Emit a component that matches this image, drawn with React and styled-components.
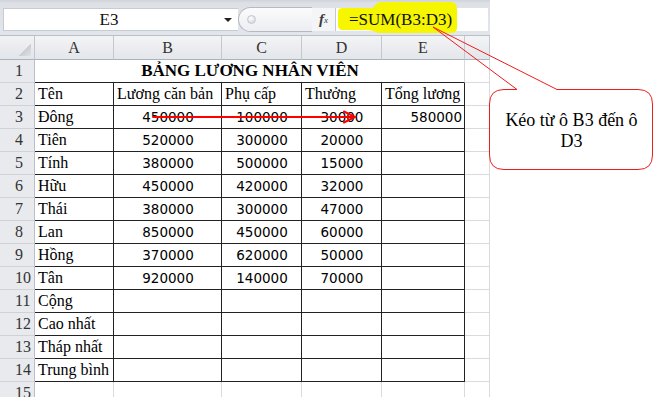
import React from 'react';
import styled, { createGlobalStyle } from 'styled-components';

const GlobalStyle = createGlobalStyle`
  html, body {
    margin: 0;
    padding: 0;
    background: #fff;
  }
`;

const serif = '"Liberation Serif", "Times New Roman", serif';

const Page = styled.div`
  position: relative;
  width: 657px;
  height: 397px;
  overflow: hidden;
  background: #fff;
  font-family: ${serif};
`;

const Sheet = styled.div`
  width: 490px;
  display: flex;
  flex-direction: column;
`;

const FormulaBar = styled.div`
  height: 36px;
  box-sizing: border-box;
  padding: 8px 2px 4px 3px;
  display: flex;
  background: linear-gradient(#cfd3d9 0, #dde1e6 3px, #e2e5e9 100%);
  border-bottom: 1px solid #b9c0c8;
`;

const NameBox = styled.div`
  width: 235px;
  display: flex;
  align-items: center;
  box-sizing: border-box;
  background: #fff;
  border: 1px solid #c6ccd3;
  border-right: none;
  font-family: ${serif};
  font-size: 17px;
  color: #111;
`;

const NameText = styled.span`
  flex: 1;
  text-align: center;
  padding-right: 10px;
`;

const DropArrow = styled.span`
  width: 0;
  height: 0;
  border-left: 4px solid transparent;
  border-right: 4px solid transparent;
  border-top: 4px solid #222;
  margin-right: 6px;
`;

const Splitter = styled.div`
  width: 74px;
  display: flex;
  align-items: center;
  box-sizing: border-box;
  margin-top: -1px;
  margin-bottom: -1px;
  border: 1px solid #b3bac3;
  border-right: none;
  border-radius: 13px 0 0 13px;
  background: linear-gradient(#fbfbfc, #eceef1);
`;

const Handle = styled.span`
  width: 7px;
  height: 7px;
  margin-left: 8px;
  border-radius: 50%;
  background: radial-gradient(circle at 40% 35%, #fff, #c9ced5);
  border: 1px solid #c2c7ce;
`;

const FxBox = styled.div`
  width: 24px;
  display: flex;
  align-items: center;
  justify-content: center;
  box-sizing: border-box;
  background: #f4f5f7;
  border-right: 1px solid #c3c8cf;
  font-family: ${serif};
  font-style: italic;
  font-weight: 700;
  font-size: 15px;
  color: #3a3a3a;

  sub {
    font-size: 9px;
    font-weight: 400;
    vertical-align: -1px;
  }
`;

const FormulaInput = styled.div`
  position: relative;
  flex: 1;
  display: flex;
  align-items: center;
  padding-left: 13px;
  background: #fff;
  font-family: ${serif};
  font-size: 17px;
  color: #111;
`;

const Highlight = styled.svg`
  position: absolute;
  left: 0;
  top: -7px;
  overflow: visible;
`;

const FormulaText = styled.span`
  position: relative;
`;

const Grid = styled.div`
  display: grid;
  grid-template-columns: 35px 79px 108px 80px 80px 83px 25px;
  grid-template-rows: 24px repeat(15, 23px);
`;

const Corner = styled.div`
  box-sizing: border-box;
  display: flex;
  align-items: flex-end;
  justify-content: flex-end;
  padding: 0 3px 3px 0;
  background: linear-gradient(#f1f2f4, #e2e5e9);
  border-right: 1px solid #c0c6cd;
  border-bottom: 1px solid #aab2bb;
`;

const CornerMark = styled.span`
  width: 12px;
  height: 12px;
  background: linear-gradient(135deg, transparent 50%, #c9ced4 50%, #dfe2e6);
`;

const ColHead = styled.div`
  box-sizing: border-box;
  display: flex;
  align-items: center;
  justify-content: center;
  background: linear-gradient(#f3f4f6, #e3e6ea);
  border-right: 1px solid #c4c9cf;
  border-bottom: 1px solid #aab2bb;
  font-family: ${serif};
  font-size: 16px;
  color: #333;
`;

const RowHead = styled.div`
  box-sizing: border-box;
  display: flex;
  align-items: center;
  padding-left: 15px;
  background: #e8eaed;
  border-right: 1px solid #b8bfc7;
  border-bottom: 1px solid #cfd3d8;
  font-family: ${serif};
  font-size: 16px;
  color: #333;
`;

const Cell = styled.div`
  box-sizing: border-box;
  grid-column: span ${(p) => p.$span || 1};
  display: flex;
  align-items: center;
  justify-content: ${(p) =>
    p.$align === 'center' ? 'center' : p.$align === 'right' ? 'flex-end' : 'flex-start'};
  padding: 0 2px 0 3px;
  border-right: 1px solid ${(p) => (p.$darkR ? '#222' : '#dadada')};
  border-bottom: 1px solid ${(p) => (p.$darkB ? '#222' : '#dadada')};
  font-family: ${(p) => (p.$num ? '"DejaVu Sans", Verdana, sans-serif' : serif)};
  font-size: ${(p) => (p.$num ? '13.5px' : p.$bold ? '17px' : '16px')};
  font-weight: ${(p) => (p.$bold ? 700 : 400)};
  white-space: nowrap;
  overflow: hidden;
  color: #000;
`;

const Overlay = styled.svg`
  position: absolute;
  left: 0;
  top: 0;
  pointer-events: none;
`;

const CalloutText = styled.div`
  position: absolute;
  left: 489px;
  top: 89px;
  width: 165px;
  height: 82px;
  box-sizing: border-box;
  padding: 2px 12px 0;
  display: flex;
  align-items: center;
  justify-content: center;
  text-align: center;
  font-family: ${serif};
  font-size: 18px;
  line-height: 21px;
  color: #000;
`;

const letters = ['A', 'B', 'C', 'D', 'E', 'F'];

const rows = [
  ['Tên', 'Lương căn bản', 'Phụ cấp', 'Thưởng', 'Tổng lương'],
  ['Đông', '450000', '100000', '30000', '580000'],
  ['Tiên', '520000', '300000', '20000', ''],
  ['Tính', '380000', '500000', '15000', ''],
  ['Hữu', '450000', '420000', '32000', ''],
  ['Thái', '380000', '300000', '47000', ''],
  ['Lan', '850000', '450000', '60000', ''],
  ['Hồng', '370000', '620000', '50000', ''],
  ['Tân', '920000', '140000', '70000', ''],
  ['Cộng', '', '', '', ''],
  ['Cao nhất', '', '', '', ''],
  ['Tháp nhất', '', '', '', ''],
  ['Trung bình', '', '', '', ''],
];

function App() {
  return (
    <Page>
      <GlobalStyle />
      <Sheet>
        <FormulaBar>
          <NameBox>
            <NameText>E3</NameText>
            <DropArrow />
          </NameBox>
          <Splitter>
            <Handle />
          </Splitter>
          <FxBox>
            f<sub>x</sub>
          </FxBox>
          <FormulaInput>
            <Highlight width="124" height="34" viewBox="0 0 124 34">
              <path
                d="M2 11 Q2 7 7 7 L37 7 Q40 1 46 1 L115 1 Q121 1 121 8 L121 27 Q121 32 115 32 L42 32 Q37 29 30 29 L7 29 Q2 29 2 24 Z"
                fill="#f6f600"
              />
            </Highlight>
            <FormulaText>=SUM(B3:D3)</FormulaText>
          </FormulaInput>
        </FormulaBar>

        <Grid>
          <Corner>
            <CornerMark />
          </Corner>
          {letters.map((l) => (
            <ColHead key={l}>{l === 'F' ? '' : l}</ColHead>
          ))}

          <RowHead>1</RowHead>
          <Cell $span={5} $align="center" $bold $darkB>
            BẢNG LƯƠNG NHÂN VIÊN
          </Cell>
          <Cell />

          {rows.map((r, i) => (
            <React.Fragment key={i}>
              <RowHead>{i + 2}</RowHead>
              {r.map((v, j) => {
                const num = i > 0 && j > 0;
                const align = !num ? 'left' : j === 4 ? 'right' : 'center';
                return (
                  <Cell key={j} $num={num} $align={align} $darkR $darkB>
                    {v}
                  </Cell>
                );
              })}
              <Cell />
            </React.Fragment>
          ))}

          <RowHead>15</RowHead>
          {[0, 1, 2, 3, 4, 5].map((k) => (
            <Cell key={k} />
          ))}
        </Grid>
      </Sheet>

      <Overlay width="657" height="397" viewBox="0 0 657 397">
        <g stroke="#ff0000" strokeWidth="2" fill="none" strokeLinecap="round">
          <line x1="153" y1="117" x2="354" y2="117" />
          <polyline points="344,111.5 355,117 344,122.5" />
        </g>
        <path
          d="M504 89.5 L517 89.5 L557 89.5 L638 89.5 Q652.5 89.5 652.5 104 L652.5 155 Q652.5 169.5 638 169.5 L504 169.5 Q489.5 169.5 489.5 155 L489.5 104 Q489.5 89.5 504 89.5 Z"
          fill="#fff"
          stroke="none"
        />
        <path
          d="M517 89.5 L504 89.5 Q489.5 89.5 489.5 104 L489.5 155 Q489.5 169.5 504 169.5 L638 169.5 Q652.5 169.5 652.5 155 L652.5 104 Q652.5 89.5 638 89.5 L557 89.5 L433 27 L517 89.5"
          fill="none"
          stroke="#ee1c1c"
          strokeWidth="1"
        />
      </Overlay>
      <CalloutText>Kéo từ ô B3 đến ô D3</CalloutText>
    </Page>
  );
}

export default App;
